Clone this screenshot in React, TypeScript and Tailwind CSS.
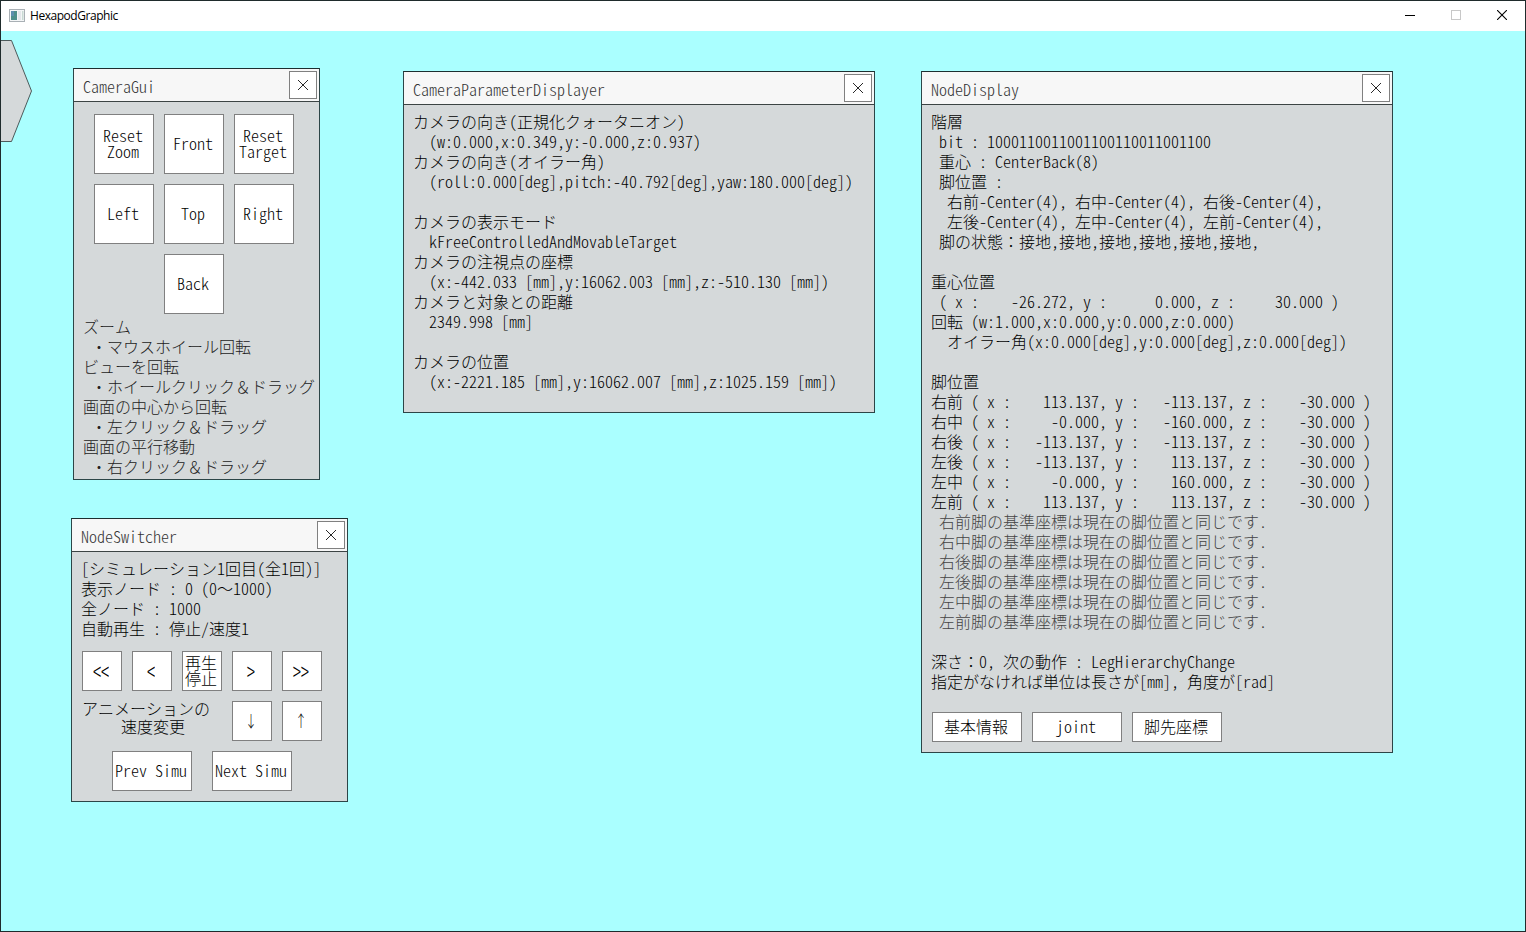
import type { ReactNode } from 'react';

/** Latin runs use half-width glyphs, so that every cell is 8px or 16px wide. */
function Mono({ children }: { children: string }) {
  const runs = children.match(/[\x20-\x7e]+|[^\x20-\x7e]+/g) ?? [];
  return (
    <>
      {runs.map((run, i) =>
        /^[\x20-\x7e]/.test(run) ? (
          <span key={i} className="[font-feature-settings:'hwid'_1,'kern'_0]">
            {run}
          </span>
        ) : (
          <span key={i} className="[font-feature-settings:'fwid'_1,'kern'_0,'palt'_0]">{run}</span>
        ),
      )}
    </>
  );
}

function Lines({ text, className = '' }: { text: string[]; className?: string }) {
  return (
    <div className={`whitespace-pre leading-5 ${className}`}>
      {text.map((line, i) => (
        <div key={i} className="h-5">
          <Mono>{line}</Mono>
        </div>
      ))}
    </div>
  );
}

function Panel({ title, place, children }: { title: string; place: string; children: ReactNode }) {
  return (
    <section className={`absolute flex flex-col border border-[#2c4547] border-t-[#1d2f30] bg-[#d5d9da] ${place}`}>
      <header className="flex h-[33px] shrink-0 items-start justify-between border-b border-[#3c4444] bg-[#f7f7f7] pt-[2px] pr-[2px] pl-[9px]">
        <h2 className="pt-[5px] leading-5 text-[#333]">
          <Mono>{title}</Mono>
        </h2>
        <button className="flex size-7 items-center justify-center border border-[#808080] bg-white pr-px pb-px">
          <svg viewBox="0 0 10 10" className="size-[10px]" stroke="#111" strokeWidth="0.9">
            <path d="M0 0L10 10M10 0L0 10" />
          </svg>
        </button>
      </header>
      {children}
    </section>
  );
}

function Btn({ lines, size, glyph = '' }: { lines: string[]; size: string; glyph?: string }) {
  return (
    <button
      className={`flex flex-col items-center justify-center whitespace-pre border border-[#808080] bg-white pr-[2px] pb-[2px] leading-4 text-black ${size}`}
    >
      {lines.map((l) => (
        <span key={l} className={`block h-4 ${glyph}`}>
          <Mono>{l}</Mono>
        </span>
      ))}
    </button>
  );
}

const pad = (v: string) => v.padStart(11, ' ');
const legs: [string, string, string][] = [
  ['右前', '113.137', '-113.137'],
  ['右中', '-0.000', '-160.000'],
  ['右後', '-113.137', '-113.137'],
  ['左後', '-113.137', '113.137'],
  ['左中', '-0.000', '160.000'],
  ['左前', '113.137', '113.137'],
];

export default function App() {
  return (
    <div className="flex h-[932px] w-[1526px] flex-col overflow-hidden border border-[#1f2b2c] bg-[#aaffff] font-['Noto_Sans_CJK_JP',sans-serif] text-[16px] font-light text-black">
      <div className="flex h-[30px] shrink-0 items-center bg-white">
        <svg viewBox="0 0 16 14" className="ml-2 h-[14px] w-4">
          <rect x="0.5" y="0.5" width="15" height="12" fill="#f4f6f7" stroke="#a9b0b5" />
          <rect x="2" y="2" width="6" height="9" fill="#4d8f8b" />
          <rect x="2" y="2" width="3" height="5" fill="#5d8fae" />
          <rect x="9" y="2" width="3" height="9" fill="#e3e7ea" />
          <rect x="13" y="2" width="1.5" height="9" fill="#c9dad4" />
        </svg>
        <span className="ml-[5px] font-['Open_Sans',sans-serif] text-[12px] font-normal tracking-[-0.46px]">HexapodGraphic</span>
        <div className="mr-[18px] ml-auto flex items-center gap-9 pb-[2px]">
          <svg viewBox="0 0 10 10" className="size-[10px]">
            <path d="M0 5.5H10" stroke="#000" />
          </svg>
          <svg viewBox="0 0 10 10" className="size-[10px]">
            <rect x="0.5" y="0.5" width="9" height="9" fill="none" stroke="#c8c8c8" />
          </svg>
          <svg viewBox="0 0 10 10" className="size-[10px]">
            <path d="M0 0L10 10M10 0L0 10" stroke="#000" strokeWidth="1.1" />
          </svg>
        </div>
      </div>

      <main className="relative flex-1">
        <svg viewBox="0 0 32 103" className="absolute top-[9px] left-0 h-[103px] w-8">
          <path d="M-1 0.5H10.5L30.5 51L10.5 101.5H-1" fill="#d5d9da" stroke="#3f4a4b" strokeWidth="0.9" />
        </svg>

        <Panel title="CameraGui" place="left-[72px] top-[37px] w-[247px] h-[412px]">
          <div className="grid grid-cols-[repeat(3,60px)] gap-[10px] pt-3 pl-5">
            <Btn size="size-[60px]" lines={['Reset', 'Zoom']} />
            <Btn size="size-[60px]" lines={['Front']} />
            <Btn size="size-[60px]" lines={['Reset', 'Target']} />
            <Btn size="size-[60px]" lines={['Left']} />
            <Btn size="size-[60px]" lines={['Top']} />
            <Btn size="size-[60px]" lines={['Right']} />
            <div />
            <Btn size="size-[60px]" lines={['Back']} />
          </div>
          <Lines
            className="mt-[2px] pl-[9px] text-[#222]"
            text={[
              'ズーム',
              ' ・マウスホイール回転',
              'ビューを回転',
              ' ・ホイールクリック＆ドラッグ',
              '画面の中心から回転',
              ' ・左クリック＆ドラッグ',
              '画面の平行移動',
              ' ・右クリック＆ドラッグ',
            ]}
          />
        </Panel>

        <Panel title="NodeSwitcher" place="left-[70px] top-[487px] w-[277px] h-[284px]">
          <Lines
            className="pt-[6px] pl-[9px]"
            text={[
              '[シミュレーション1回目(全1回)]',
              '表示ノード : 0 (0～1000)',
              '全ノード : 1000',
              '自動再生 : 停止/速度1',
            ]}
          />
          <div className="mt-[13px] flex gap-[10px] pl-[10px]">
            <Btn size="size-10" glyph="scale-y-[1.6]" lines={['<<']} />
            <Btn size="size-10" glyph="scale-y-[1.6]" lines={['<']} />
            <Btn size="size-10" lines={['再生', '停止']} />
            <Btn size="size-10" glyph="scale-y-[1.6]" lines={['>']} />
            <Btn size="size-10" glyph="scale-y-[1.6]" lines={['>>']} />
          </div>
          <div className="mt-[10px] flex gap-[10px] pl-[10px]">
            <div className="w-[140px] whitespace-pre leading-[18px]">
              <div className="-mt-[2px]"><Mono>アニメーションの</Mono></div>
              <div className="-ml-px"><Mono>{'     速度変更'}</Mono></div>
            </div>
            <Btn size="size-10" glyph="scale-x-75" lines={['↓']} />
            <Btn size="size-10" glyph="scale-x-75" lines={['↑']} />
          </div>
          <div className="mt-[10px] flex gap-5 pl-10">
            <Btn size="w-20 h-10" lines={['Prev Simu']} />
            <Btn size="w-20 h-10" lines={['Next Simu']} />
          </div>
        </Panel>

        <Panel title="CameraParameterDisplayer" place="left-[402px] top-[40px] w-[472px] h-[342px]">
          <Lines
            className="pt-[6px] pl-[9px]"
            text={[
              'カメラの向き(正規化クォータニオン)',
              '  (w:0.000,x:0.349,y:-0.000,z:0.937)',
              'カメラの向き(オイラー角)',
              '  (roll:0.000[deg],pitch:-40.792[deg],yaw:180.000[deg])',
              '',
              'カメラの表示モード',
              '  kFreeControlledAndMovableTarget',
              'カメラの注視点の座標',
              '  (x:-442.033 [mm],y:16062.003 [mm],z:-510.130 [mm])',
              'カメラと対象との距離',
              '  2349.998 [mm]',
              '',
              'カメラの位置',
              '  (x:-2221.185 [mm],y:16062.007 [mm],z:1025.159 [mm])',
            ]}
          />
        </Panel>

        <Panel title="NodeDisplay" place="left-[920px] top-[40px] w-[472px] h-[682px]">
          <Lines
            className="pt-[6px] pl-[9px]"
            text={[
              '階層',
              ' bit : 1000110011001100110011001100',
              ' 重心 : CenterBack(8)',
              ' 脚位置 :',
              '  右前-Center(4), 右中-Center(4), 右後-Center(4),',
              '  左後-Center(4), 左中-Center(4), 左前-Center(4),',
              ' 脚の状態：接地,接地,接地,接地,接地,接地,',
              '',
              '重心位置',
              ` ( x :${pad('-26.272')}, y :${pad('0.000')}, z :${pad('30.000')} )`,
              '回転 (w:1.000,x:0.000,y:0.000,z:0.000)',
              '  オイラー角(x:0.000[deg],y:0.000[deg],z:0.000[deg])',
              '',
              '脚位置',
              ...legs.map(([n, x, y]) => `${n} ( x :${pad(x)}, y :${pad(y)}, z :${pad('-30.000')} )`),
            ]}
          />
          <Lines
            className="pl-[9px] text-[#444]"
            text={legs.map(([n]) => ` ${n}脚の基準座標は現在の脚位置と同じです.`)}
          />
          <Lines
            className="pt-5 pl-[9px]"
            text={['深さ：0, 次の動作 : LegHierarchyChange', '指定がなければ単位は長さが[mm], 角度が[rad]']}
          />
          <div className="mt-[21px] flex gap-[10px] pl-[10px]">
            <Btn size="w-[90px] h-[30px]" lines={['基本情報']} />
            <Btn size="w-[90px] h-[30px]" lines={['joint']} />
            <Btn size="w-[90px] h-[30px]" lines={['脚先座標']} />
          </div>
        </Panel>
      </main>
    </div>
  );
}
